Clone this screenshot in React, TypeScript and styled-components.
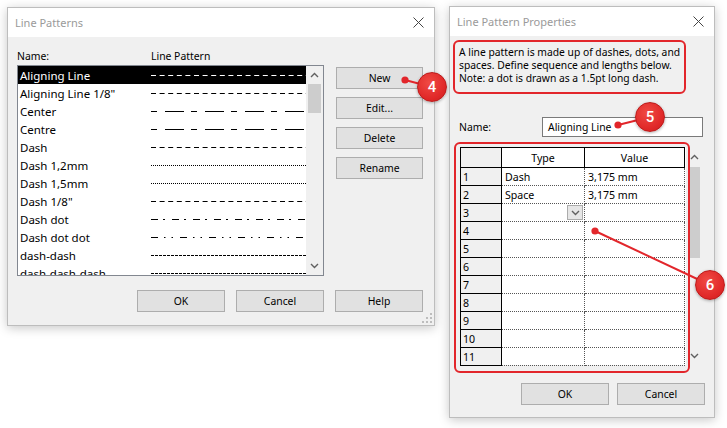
import React from 'react'
import styled, { createGlobalStyle } from 'styled-components'

const GlobalStyle = createGlobalStyle`
  html, body { margin: 0; padding: 0; background: #fff; }
  body { font-family: 'Noto Sans', 'Liberation Sans', sans-serif; }
  * { box-sizing: border-box; }
`

// list of patterns in the left dialog (name, dasharray)
const patterns: [string, string][] = [
  ['Aligning Line', '5 3.6'],
  ['Aligning Line 1/8"', '5 3.6'],
  ['Center', '6 8 19 7'],
  ['Centre', '6 8 19 7'],
  ['Dash', '5 3.6'],
  ['Dash 1,2mm', '1 1'],
  ['Dash 1,5mm', '1 1'],
  ['Dash 1/8"', '5 3.6'],
  ['Dash dot', '7 5 2 7'],
  ['Dash dot dot', '7 6 1.5 6 1.5 7'],
  ['dash-dash', '3 1'],
  ['dash-dash-dash', '3 1'],
]

const gridRows = [
  { n: 1, type: 'Dash', value: '3,175 mm' },
  { n: 2, type: 'Space', value: '3,175 mm' },
  { n: 3, type: '', value: '', drop: true },
  { n: 4 }, { n: 5 }, { n: 6 }, { n: 7 }, { n: 8 }, { n: 9 }, { n: 10 }, { n: 11 },
]

const CloseIcon = () => (
  <svg width="11" height="11" viewBox="0 0 11 11">
    <path d="M0.5 0.5 L10.5 10.5 M10.5 0.5 L0.5 10.5" stroke="#444" strokeWidth="1" fill="none" />
  </svg>
)

const Chevron = ({ up }: { up?: boolean }) => (
  <svg width="9" height="6" viewBox="0 0 9 6">
    <polyline points={up ? '1,5 4.5,1.5 8,5' : '1,1 4.5,4.5 8,1'} stroke="#606060" strokeWidth="1.4" fill="none" />
  </svg>
)

const Pattern = ({ dash }: { dash: string }) => (
  <svg width="155" height="18" viewBox="0 0 155 18">
    <line x1="0" y1="9.5" x2="155" y2="9.5" stroke="currentColor" strokeWidth="1" strokeDasharray={dash} />
  </svg>
)

const Grip = () => (
  <GripBox width="10" height="10" viewBox="0 0 10 10">
    {[[8, 0], [8, 4], [4, 4], [8, 8], [4, 8], [0, 8]].map(([x, y]) => (
      <rect key={`${x}-${y}`} x={x} y={y} width="2" height="2" fill="#bdbdbd" />
    ))}
  </GripBox>
)

const App: React.FC = () => {
  return (
    <>
      <GlobalStyle />
      <Page>
        <Dialog $w={428} $h={319} $top={1}>
          <TitleBar>
            <Title>Line Patterns</Title>
            <CloseIcon />
          </TitleBar>
          <LeftBody>
            <HeadLabels>
              <HeadLabel $w={134}>Name:</HeadLabel>
              <HeadLabel>Line Pattern</HeadLabel>
            </HeadLabels>
            <ListRow>
              <ListBox>
                <ListRows>
                  {patterns.map(([name, dash], i) => (
                    <ListItem key={name} $selected={i === 0}>
                      <ItemName>{name}</ItemName>
                      <Pattern dash={dash} />
                    </ListItem>
                  ))}
                </ListRows>
                <ScrollBar $w={17}>
                  <ArrowBox $h={18}><Chevron up /></ArrowBox>
                  <Thumb $h={29} />
                  <Spacer />
                  <ArrowBox $h={18}><Chevron /></ArrowBox>
                </ScrollBar>
              </ListBox>
              <SideButtons>
                <Button $w={87}>New</Button>
                <Button $w={87}>Edit...</Button>
                <Button $w={87}>Delete</Button>
                <Button $w={87}>Rename</Button>
              </SideButtons>
            </ListRow>
            <ButtonRow $gap={11} $top={14}>
              <Button $w={88}>OK</Button>
              <Button $w={88}>Cancel</Button>
              <Button $w={88}>Help</Button>
            </ButtonRow>
          </LeftBody>
          <Grip />
        </Dialog>

        <Dialog $w={266} $h={412}>
          <TitleBar>
            <Title>Line Pattern Properties</Title>
            <CloseIcon />
          </TitleBar>
          <RightBody>
            <Description>
              A line pattern is made up of dashes, dots, and<br />
              spaces. Define sequence and lengths below.<br />
              Note: a dot is drawn as a 1.5pt long dash.
            </Description>
            <NameRow>
              <NameLabel>Name:</NameLabel>
              <NameInput>Aligning Line</NameInput>
            </NameRow>
            <GridBox>
              <GridTable>
                <colgroup>
                  <col style={{ width: 41 }} />
                  <col style={{ width: 83 }} />
                  <col style={{ width: 100 }} />
                </colgroup>
                <thead>
                  <tr>
                    <CornerCell />
                    <ColHead>Type</ColHead>
                    <ColHead>Value</ColHead>
                  </tr>
                </thead>
                <tbody>
                  {gridRows.map(r => (
                    <tr key={r.n}>
                      <RowHead>{r.n}</RowHead>
                      <Cell>
                        <CellInner>
                          <span>{r.type}</span>
                          {r.drop && <DropBtn><Chevron /></DropBtn>}
                        </CellInner>
                      </Cell>
                      <Cell><CellInner>{r.value}</CellInner></Cell>
                    </tr>
                  ))}
                </tbody>
              </GridTable>
              <ScrollBar $w={16}>
                <ArrowBox $h={20}><Chevron up /></ArrowBox>
                <Thumb $h={91} />
                <Spacer />
                <ArrowBox $h={18}><Chevron /></ArrowBox>
              </ScrollBar>
            </GridBox>
            <ButtonRow $gap={8} $top={18}>
              <Button $w={88}>OK</Button>
              <Button $w={88}>Cancel</Button>
            </ButtonRow>
          </RightBody>
        </Dialog>

        <Overlay width="727" height="428" viewBox="0 0 727 428">
          <rect x="454" y="41" width="231" height="52" rx="5" fill="none" stroke="#e2262b" strokeWidth="2" />
          <rect x="455" y="143" width="234" height="229" rx="5" fill="none" stroke="#e2262b" strokeWidth="2" />
          <g stroke="#e2262b" strokeWidth="2">
            <line x1="405" y1="80" x2="432" y2="87" />
            <line x1="618" y1="125" x2="650" y2="117" />
            <line x1="595" y1="231" x2="710" y2="285" />
          </g>
          <g fill="#e2262b">
            <circle cx="405" cy="80" r="3.6" />
            <circle cx="618" cy="125" r="3.6" />
            <circle cx="595" cy="231" r="3.6" />
          </g>
        </Overlay>
        <Badge $x={432} $y={87}>4</Badge>
        <Badge $x={650} $y={117}>5</Badge>
        <Badge $x={710} $y={285}>6</Badge>
      </Page>
    </>
  )
}

const Page = styled.div`
  position: relative;
  width: 727px;
  height: 428px;
  overflow: hidden;
  display: flex;
  align-items: flex-start;
  gap: 14px;
  padding: 6px 0 0 7px;
  font-size: 10.4px;
  color: #000;
`

const Dialog = styled.div<{ $w: number; $h: number; $top?: number }>`
  position: relative;
  display: flex;
  flex-direction: column;
  flex-shrink: 0;
  width: ${p => p.$w}px;
  height: ${p => p.$h}px;
  margin-top: ${p => p.$top || 0}px;
  background: #f0f0f0;
  border: 1px solid #bdbdbd;
  box-shadow: 0 2px 10px rgba(0, 0, 0, 0.22);
`

const TitleBar = styled.div`
  display: flex;
  align-items: center;
  justify-content: space-between;
  flex-shrink: 0;
  height: 29px;
  padding: 0 10px 0 7px;
  background: #fff;
`

const Title = styled.span`
  color: #9a9a9a;
  font-size: 11px;
`

const LeftBody = styled.div`
  display: flex;
  flex-direction: column;
  padding: 9px 11px 0 9px;
`

const HeadLabels = styled.div`
  display: flex;
  align-items: center;
  height: 19px;
`

const HeadLabel = styled.span<{ $w?: number }>`
  width: ${p => (p.$w ? `${p.$w}px` : 'auto')};
`

const ListRow = styled.div`
  display: flex;
  gap: 12px;
`

const ListBox = styled.div`
  display: flex;
  width: 307px;
  height: 211px;
  border: 1px solid #828790;
  background: #fff;
`

const ListRows = styled.div`
  flex: 1;
  overflow: hidden;
`

const ListItem = styled.div<{ $selected?: boolean }>`
  display: flex;
  align-items: center;
  height: 18px;
  padding-left: 2px;
  background: ${p => (p.$selected ? '#000' : 'transparent')};
  color: ${p => (p.$selected ? '#fff' : '#000')};
  font-size: 11.5px;
  white-space: nowrap;
`

const ItemName = styled.span`
  width: 131px;
  flex-shrink: 0;
`

const ScrollBar = styled.div<{ $w: number }>`
  display: flex;
  flex-direction: column;
  width: ${p => p.$w}px;
  flex-shrink: 0;
  background: #f0f0f0;
`

const ArrowBox = styled.div<{ $h: number }>`
  display: flex;
  align-items: center;
  justify-content: center;
  height: ${p => p.$h}px;
  flex-shrink: 0;
`

const Thumb = styled.div<{ $h: number }>`
  height: ${p => p.$h}px;
  margin: 0 2px;
  background: #cdcdcd;
  flex-shrink: 0;
`

const Spacer = styled.div`
  flex: 1;
`

const SideButtons = styled.div`
  display: flex;
  flex-direction: column;
  gap: 8px;
  padding-top: 2px;
`

const Button = styled.button<{ $w: number }>`
  display: flex;
  align-items: center;
  justify-content: center;
  width: ${p => p.$w}px;
  height: 22px;
  padding: 0;
  background: #e1e1e1;
  border: 1px solid #adadad;
  border-radius: 0;
  color: #000;
  font-family: inherit;
  font-size: 10.4px;
`

const ButtonRow = styled.div<{ $gap: number; $top: number }>`
  display: flex;
  justify-content: flex-end;
  gap: ${p => p.$gap}px;
  margin-top: ${p => p.$top}px;
`

const GripBox = styled.svg`
  position: absolute;
  right: 2px;
  bottom: 2px;
`

const RightBody = styled.div`
  display: flex;
  flex-direction: column;
  padding: 10px 9px 0 9px;
`

const Description = styled.div`
  line-height: 13px;
  font-size: 10.3px;
  white-space: nowrap;
`

const NameRow = styled.div`
  display: flex;
  align-items: center;
  height: 20px;
  margin-top: 32px;
`

const NameLabel = styled.span`
  width: 83px;
  flex-shrink: 0;
`

const NameInput = styled.div`
  display: flex;
  align-items: center;
  width: 161px;
  height: 20px;
  padding-left: 5px;
  background: #fff;
  border: 1px solid #7a7a7a;
`

const GridBox = styled.div`
  display: flex;
  justify-content: space-between;
  width: 242px;
  height: 218px;
  margin: 10px 0 0 1px;
  background: #fff;
  font-size: 10.6px;
`

const GridTable = styled.table`
  width: 224px;
  border-collapse: collapse;
  table-layout: fixed;
  align-self: flex-start;
`

const CornerCell = styled.th`
  height: 20px;
  padding: 0;
  background: #f0f0f0;
  border: 1px solid #000;
`

const ColHead = styled.th`
  height: 20px;
  padding: 0;
  font-weight: normal;
  text-align: center;
  background: #fff;
  border: 1px solid #000;
`

const RowHead = styled.td`
  height: 18px;
  padding: 0 0 0 2px;
  background: #f0f0f0;
  border: 1px solid #000;
`

const Cell = styled.td`
  height: 18px;
  padding: 0 1px 0 3px;
  border: 1px dotted #555;
`

const CellInner = styled.div`
  display: flex;
  align-items: center;
  justify-content: space-between;
  height: 17px;
`

const DropBtn = styled.div`
  display: flex;
  align-items: center;
  justify-content: center;
  width: 16px;
  height: 15px;
  background: #e6e6e6;
  border: 1px solid #acacac;
`

const Overlay = styled.svg`
  position: absolute;
  left: 0;
  top: 0;
  pointer-events: none;
`

const Badge = styled.div<{ $x: number; $y: number }>`
  position: absolute;
  left: ${p => p.$x - 15}px;
  top: ${p => p.$y - 15}px;
  display: flex;
  align-items: center;
  justify-content: center;
  width: 30px;
  height: 30px;
  border-radius: 50%;
  background: radial-gradient(circle at 40% 35%, #f04a44, #e02828 65%, #c81e1e);
  border: 1px solid #bb1b1b;
  box-shadow: 0 1px 3px rgba(0, 0, 0, 0.3);
  color: #fff;
  font-family: Roboto, 'Noto Sans', sans-serif;
  font-size: 15px;
  font-weight: 500;
`

export default App
